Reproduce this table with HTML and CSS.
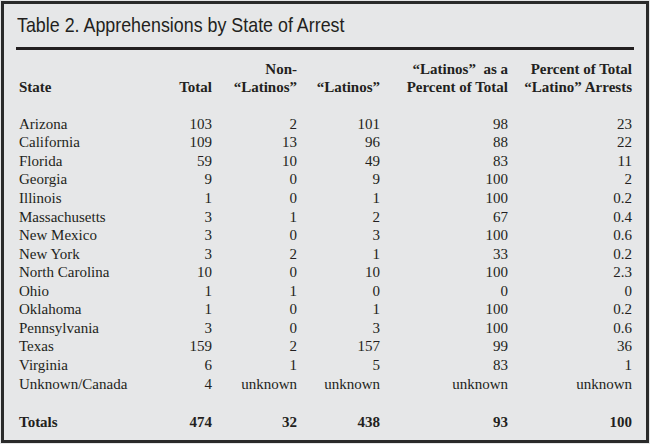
FILE: index.html
```html
<!DOCTYPE html>
<html>
<head>
<meta charset="utf-8">
<link rel="stylesheet" href="styles.css">
</head>
<body>
<div class="frame">
  <h1 class="title"><span class="title-text">Table 2. Apprehensions by State of Arrest</span></h1>
  <table class="data">
    <colgroup>
      <col class="c-state"><col class="c-total"><col class="c-non"><col class="c-lat"><col class="c-pct"><col class="c-pct2">
    </colgroup>
    <thead>
      <tr>
        <th class="left">State</th>
        <th>Total</th>
        <th>Non-<br>“Latinos”</th>
        <th>“Latinos”</th>
        <th>“Latinos”&nbsp; as a<br>Percent of Total</th>
        <th>Percent of Total<br>“Latino” Arrests</th>
      </tr>
    </thead>
    <tbody>
      <tr><td class="left">Arizona</td><td>103</td><td>2</td><td>101</td><td>98</td><td>23</td></tr>
      <tr><td class="left">California</td><td>109</td><td>13</td><td>96</td><td>88</td><td>22</td></tr>
      <tr><td class="left">Florida</td><td>59</td><td>10</td><td>49</td><td>83</td><td>11</td></tr>
      <tr><td class="left">Georgia</td><td>9</td><td>0</td><td>9</td><td>100</td><td>2</td></tr>
      <tr><td class="left">Illinois</td><td>1</td><td>0</td><td>1</td><td>100</td><td>0.2</td></tr>
      <tr><td class="left">Massachusetts</td><td>3</td><td>1</td><td>2</td><td>67</td><td>0.4</td></tr>
      <tr><td class="left">New Mexico</td><td>3</td><td>0</td><td>3</td><td>100</td><td>0.6</td></tr>
      <tr><td class="left">New York</td><td>3</td><td>2</td><td>1</td><td>33</td><td>0.2</td></tr>
      <tr><td class="left">North Carolina</td><td>10</td><td>0</td><td>10</td><td>100</td><td>2.3</td></tr>
      <tr><td class="left">Ohio</td><td>1</td><td>1</td><td>0</td><td>0</td><td>0</td></tr>
      <tr><td class="left">Oklahoma</td><td>1</td><td>0</td><td>1</td><td>100</td><td>0.2</td></tr>
      <tr><td class="left">Pennsylvania</td><td>3</td><td>0</td><td>3</td><td>100</td><td>0.6</td></tr>
      <tr><td class="left">Texas</td><td>159</td><td>2</td><td>157</td><td>99</td><td>36</td></tr>
      <tr><td class="left">Virginia</td><td>6</td><td>1</td><td>5</td><td>83</td><td>1</td></tr>
      <tr><td class="left">Unknown/Canada</td><td>4</td><td>unknown</td><td>unknown</td><td>unknown</td><td>unknown</td></tr>
    </tbody>
    <tfoot>
      <tr class="totals"><td class="left">Totals</td><td>474</td><td>32</td><td>438</td><td>93</td><td>100</td></tr>
    </tfoot>
  </table>
</div>
</body>
</html>
```
FILE: styles.css
```css
html, body {
  margin: 0;
  padding: 0;
  background: #e6e7e8;
}
.frame {
  box-sizing: border-box;
  width: 648px;
  height: 442px;
  margin: 1px;
  border: 3px solid #2a2a2a;
  background: #e6e7e8;
  color: #231f20;
}
.title {
  margin: 8.6px 12px 0 12px;
  padding: 0 0 10.4px 1px;
  border-bottom: 3px solid #231f20;
  font-family: "Liberation Sans", Arial, sans-serif;
  font-weight: normal;
  font-size: 21px;
  line-height: 24px;
}
.title-text {
  display: inline-block;
  white-space: nowrap;
  transform: scaleX(0.85);
  transform-origin: left center;
}
.data {
  margin: 9.6px 0 0 15px;
  border-collapse: collapse;
  table-layout: fixed;
  width: 613px;
  font-family: "Liberation Serif", "Times New Roman", serif;
  font-size: 15px;
  line-height: 18.57px;
}
.c-state { width: 120px; }
.c-total { width: 73px; }
.c-non { width: 85px; }
.c-lat { width: 83px; }
.c-pct { width: 128px; }
.c-pct2 { width: 124px; }
.data th, .data td {
  padding: 0;
  text-align: right;
  white-space: nowrap;
}
.data th {
  font-weight: bold;
  vertical-align: bottom;
  padding-bottom: 18px;
}
.data .left {
  text-align: left;
}
.totals td {
  font-weight: bold;
  padding-top: 19.4px;
}
```
